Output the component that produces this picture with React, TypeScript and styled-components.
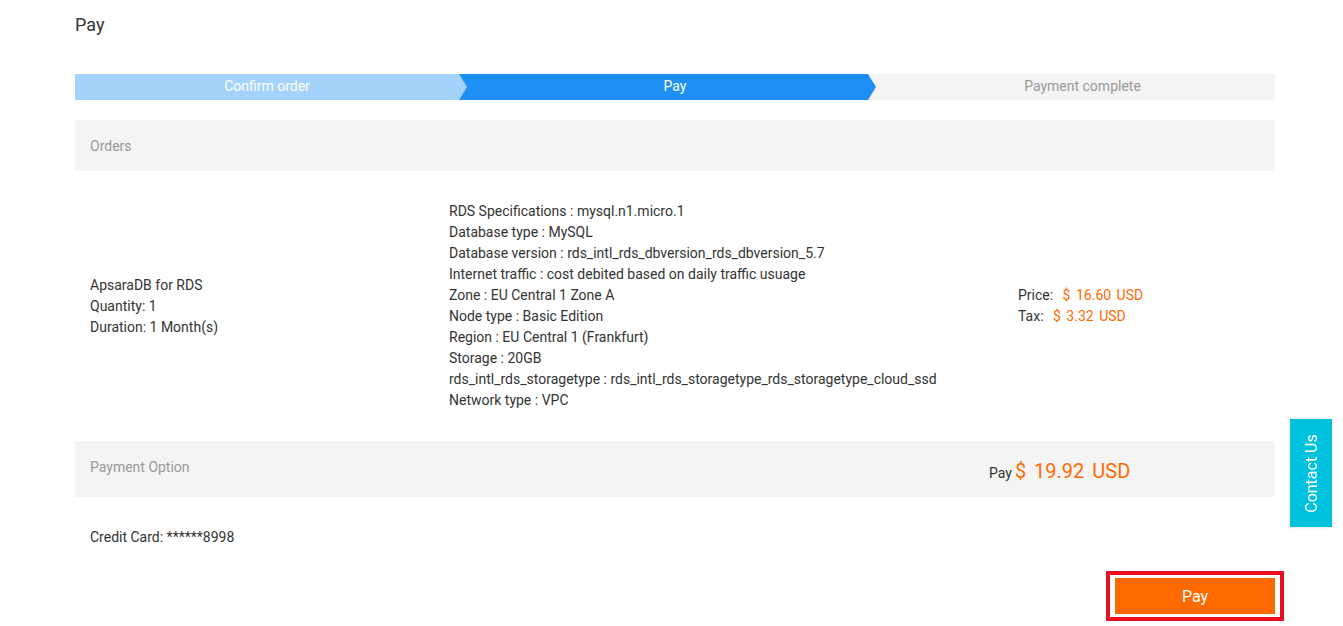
import React from 'react';
import styled, { createGlobalStyle } from 'styled-components';

const GlobalStyle = createGlobalStyle`
    html, body {
        margin: 0;
        padding: 0;
        background: #fff;
        font-family: Roboto, "Liberation Sans", Arial, sans-serif;
        color: #333;
    }
`;

const Page = styled.div`
    width: 1200px;
    margin-left: 75px;
    padding-top: 14px;
`;

const Title = styled.h1`
    margin: 0;
    font-size: 18px;
    font-weight: 400;
    line-height: 22px;
    color: #333;
`;

const Steps = styled.div`
    display: flex;
    height: 26px;
    margin-top: 38px;
`;

// each step is a flat bar; the arrow tip is drawn over the next step
const Step = styled.div<{ $bg: string; $color: string; $width: number; $pad: number; $z: number; $arrow?: boolean }>`
    position: relative;
    width: ${props => props.$width}px;
    padding-left: ${props => props.$pad}px;
    box-sizing: border-box;
    background: ${props => props.$bg};
    color: ${props => props.$color};
    font-size: 14px;
    line-height: 25px;
    text-align: center;
    z-index: ${props => props.$z};

    &::after {
        content: '';
        display: ${props => (props.$arrow ? 'block' : 'none')};
        position: absolute;
        top: 0;
        right: -8px;
        width: 0;
        height: 0;
        border-top: 13px solid transparent;
        border-bottom: 13px solid transparent;
        border-left: 8px solid ${props => props.$bg};
    }
`;

const SectionHeader = styled.div<{ $height: number }>`
    display: flex;
    align-items: flex-start;
    justify-content: space-between;
    height: ${props => props.$height}px;
    box-sizing: border-box;
    padding: 16px 0 0 15px;
    background: #f4f4f4;
    color: #999;
    font-size: 14px;
    line-height: 20px;
`;

const OrdersHeader = styled(SectionHeader)`
    margin-top: 20px;
`;

const OrderRow = styled.div`
    display: grid;
    grid-template-columns: 359px 569px 1fr;
    align-items: center;
    padding: 30px 0 30px 15px;
    font-size: 14px;
    line-height: 21px;
    color: #333;
`;

const Lines = styled.div`
    display: flex;
    flex-direction: column;
`;

const Money = styled.span<{ $size?: number }>`
    color: #ff6a00;
    font-size: ${props => props.$size || 14}px;
    margin-left: ${props => (props.$size ? 3 : 6)}px;
    word-spacing: ${props => (props.$size ? 3 : 2)}px;
`;

const TotalBox = styled.div`
    display: flex;
    align-items: baseline;
    width: 286px;
    margin-top: 4px;
    font-size: 14px;
    color: #333;
`;

const CardLine = styled.div`
    padding: 30px 0 0 15px;
    font-size: 14px;
    line-height: 20px;
`;

const Footer = styled.div`
    display: flex;
    justify-content: flex-end;
    margin-top: 24px;
    margin-right: -9px;
`;

const Highlight = styled.div`
    border: 4px solid #e81123;
    padding: 3px 5px;
    background: #fff;
`;

const PayButton = styled.button`
    display: block;
    width: 160px;
    height: 36px;
    border: none;
    background: #ff6a00;
    color: #fff;
    font-family: Roboto, "Liberation Sans", Arial, sans-serif;
    font-size: 16px;
    cursor: pointer;
`;

const ContactTab = styled.div`
    position: fixed;
    left: 1290px;
    top: 419px;
    width: 42px;
    height: 108px;
    background: #00c1de;
    box-shadow: 0 0 3px rgba(0, 0, 0, 0.15);
    display: flex;
    align-items: center;
    justify-content: center;
`;

const ContactText = styled.span`
    display: block;
    transform: rotate(-90deg);
    white-space: nowrap;
    color: #fff;
    font-size: 16px;
`;

const specs = [
    'RDS Specifications : mysql.n1.micro.1',
    'Database type : MySQL',
    'Database version : rds_intl_rds_dbversion_rds_dbversion_5.7',
    'Internet traffic : cost debited based on daily traffic usuage',
    'Zone : EU Central 1 Zone A',
    'Node type : Basic Edition',
    'Region : EU Central 1 (Frankfurt)',
    'Storage : 20GB',
    'rds_intl_rds_storagetype : rds_intl_rds_storagetype_rds_storagetype_cloud_ssd',
    'Network type : VPC',
];

const App = () => (
    <>
        <GlobalStyle />
        <Page>
            <Title>Pay</Title>

            <Steps>
                <Step $bg="#a3d3fa" $color="#fff" $width={384} $pad={0} $z={3} $arrow>
                    Confirm order
                </Step>
                <Step $bg="#1e90f5" $color="#fff" $width={409} $pad={23} $z={2} $arrow>
                    Pay
                </Step>
                <Step $bg="#f4f4f4" $color="#999" $width={407} $pad={22} $z={1}>
                    Payment complete
                </Step>
            </Steps>

            <OrdersHeader $height={51}>Orders</OrdersHeader>
            <OrderRow>
                <Lines>
                    <span>ApsaraDB for RDS</span>
                    <span>Quantity: 1</span>
                    <span>Duration: 1 Month(s)</span>
                </Lines>
                <Lines>
                    {specs.map(line => (
                        <span key={line}>{line}</span>
                    ))}
                </Lines>
                <Lines>
                    <span>
                        Price: <Money>$ 16.60 USD</Money>
                    </span>
                    <span>
                        Tax: <Money>$ 3.32 USD</Money>
                    </span>
                </Lines>
            </OrderRow>

            <SectionHeader $height={56}>
                Payment Option
                <TotalBox>
                    Pay
                    <Money $size={20}>$ 19.92 USD</Money>
                </TotalBox>
            </SectionHeader>

            <CardLine>Credit Card: ******8998</CardLine>

            <Footer>
                <Highlight>
                    <PayButton>Pay</PayButton>
                </Highlight>
            </Footer>
        </Page>

        <ContactTab>
            <ContactText>Contact Us</ContactText>
        </ContactTab>
    </>
);

export default App;
